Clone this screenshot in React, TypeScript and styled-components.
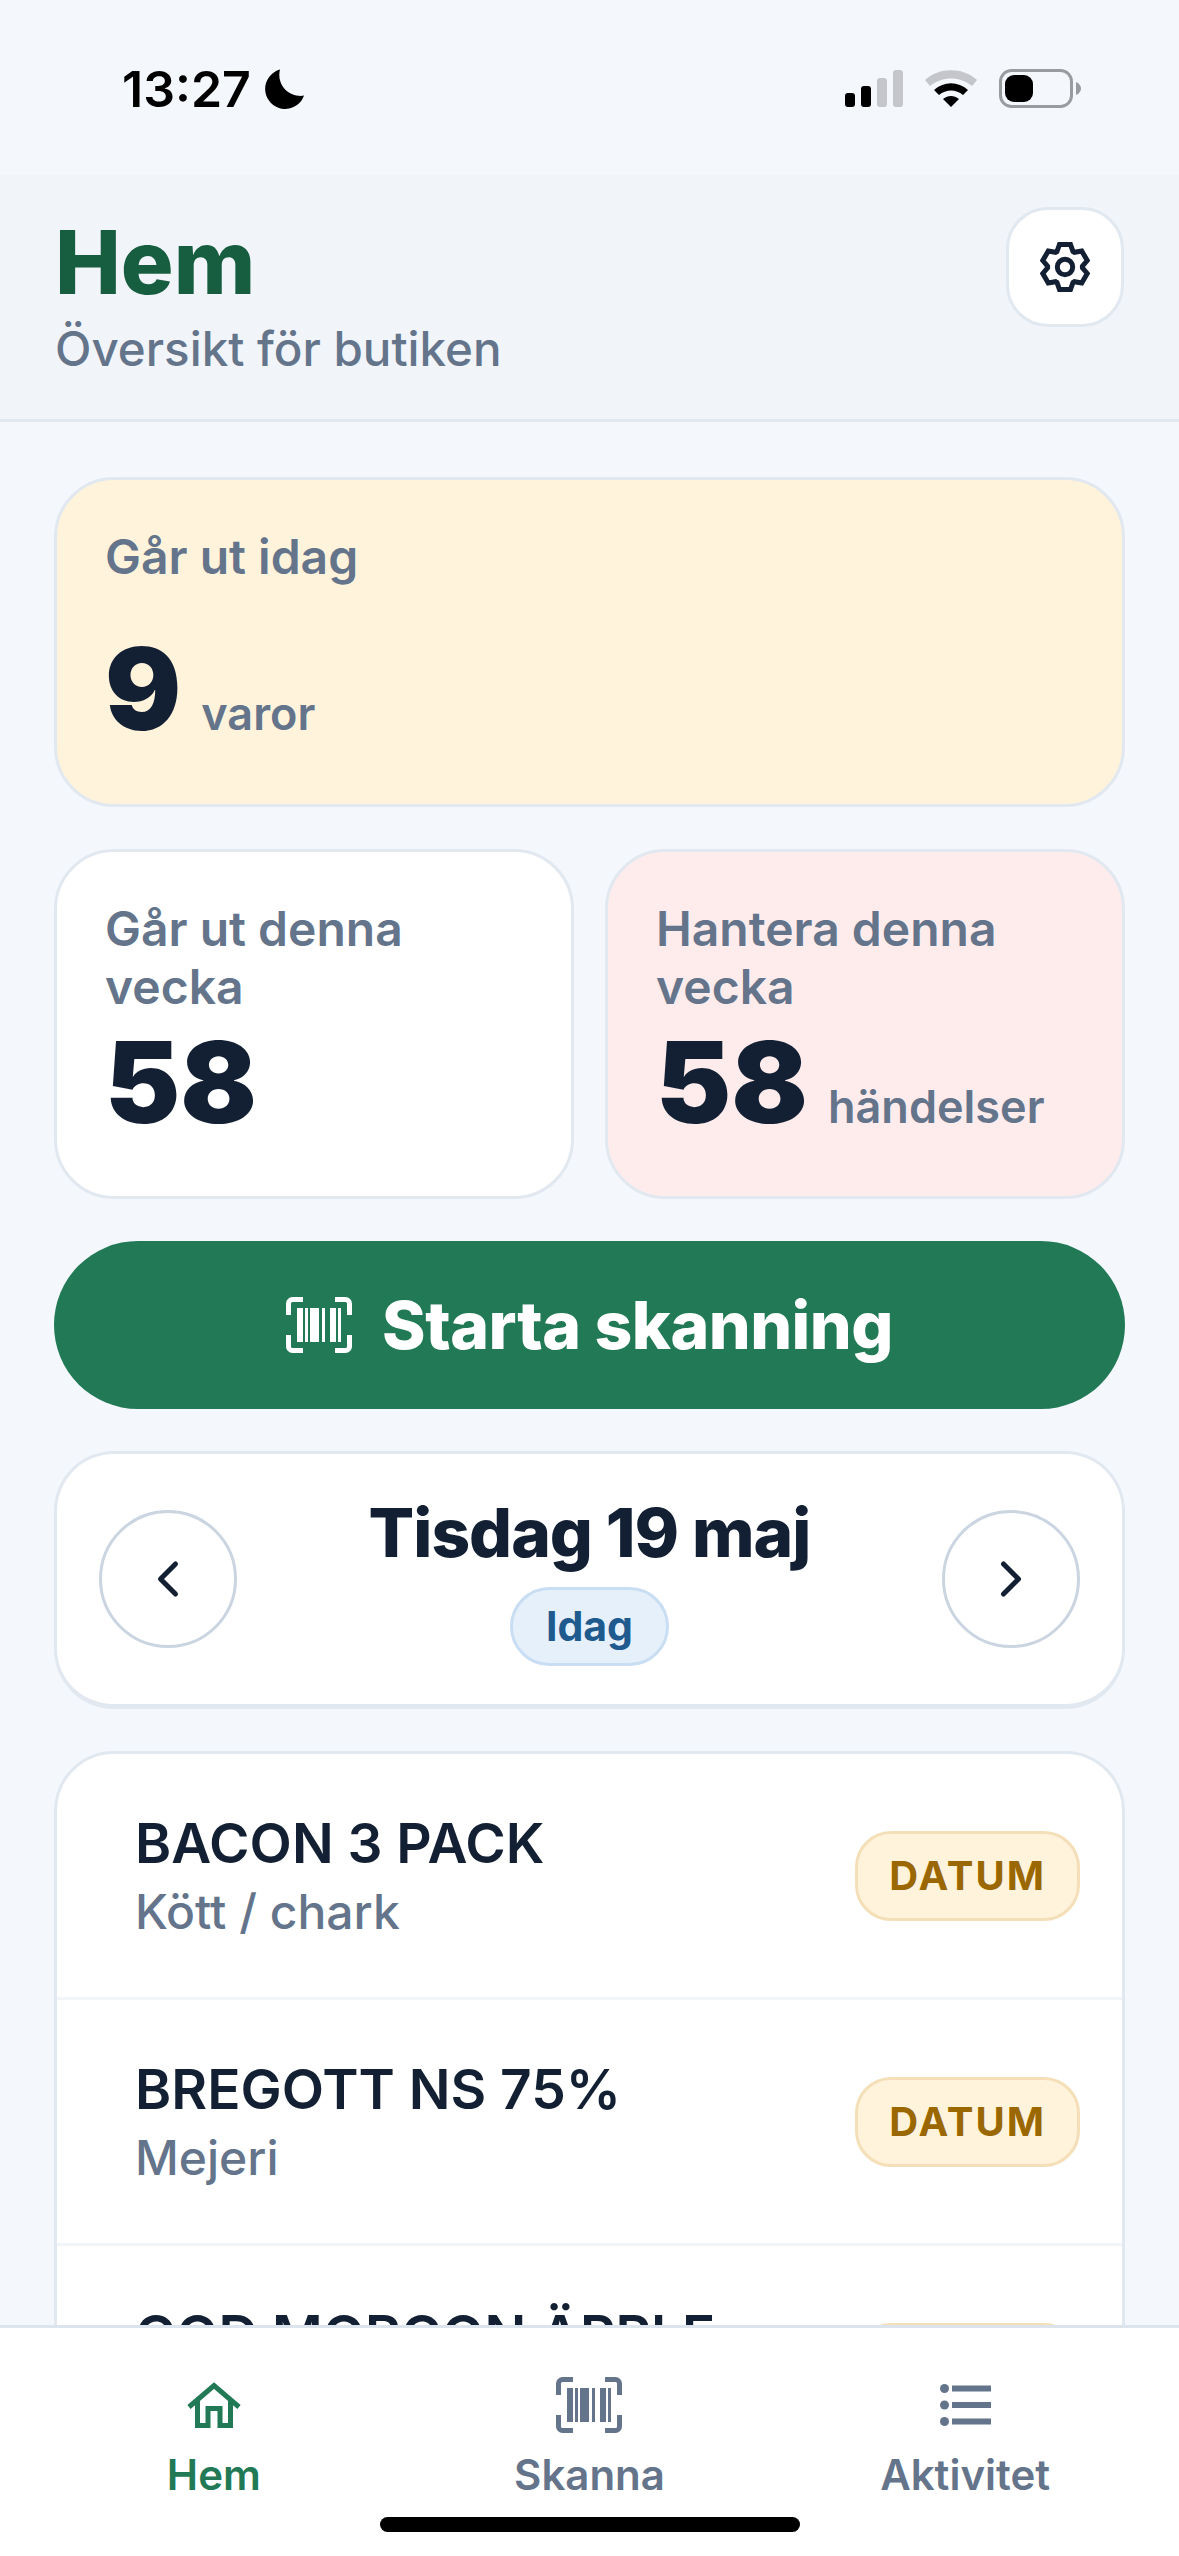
import styled, { createGlobalStyle } from 'styled-components';

const GlobalStyle = createGlobalStyle`
    html, body {
        margin: 0;
        padding: 0;
        background: #f4f7fc;
        font-family: Inter, 'Liberation Sans', sans-serif;
    }
    * {
        box-sizing: border-box;
    }
`;

const Screen = styled.div`
    width: 1179px;
    height: 2556px;
    display: flex;
    flex-direction: column;
    overflow: hidden;
    background: #f4f7fc;
`;

const StatusBar = styled.div`
    height: 175px;
    flex-shrink: 0;
    padding: 59px 98px 0 122px;
    display: flex;
    justify-content: space-between;
    align-items: flex-start;
`;

const Clock = styled.div`
    display: flex;
    align-items: center;
    gap: 14px;
    font-size: 50px;
    line-height: 60px;
    font-weight: 600;
    color: #000;
`;

const StatusIcons = styled.div`
    display: flex;
    align-items: center;
    gap: 22px;
    padding-top: 10px;
`;

const Header = styled.header`
    height: 247px;
    flex-shrink: 0;
    padding: 32px 55px 0 55px;
    display: flex;
    justify-content: space-between;
    align-items: flex-start;
    background: #f1f4f9;
    border-bottom: 3px solid #e2e8f0;
`;

const PageTitle = styled.h1`
    margin: 0;
    padding-top: 5px;
    font-size: 88px;
    line-height: 100px;
    font-weight: 800;
    color: #175e41;
`;

const PageSubtitle = styled.div`
    margin-top: 10px;
    font-size: 47.5px;
    line-height: 54px;
    font-weight: 500;
    color: #64748b;
`;

const SettingsButton = styled.button`
    width: 118px;
    height: 120px;
    padding: 0;
    display: flex;
    align-items: center;
    justify-content: center;
    background: #fff;
    border: 3px solid #e2e8f0;
    border-radius: 42px;
    color: #132033;
`;

const Main = styled.main`
    flex: 1;
    min-height: 0;
    overflow: hidden;
    padding: 55px 54px 0;
    display: flex;
    flex-direction: column;
`;

const StatCard = styled.section<{ $bg: string; $height: number }>`
    height: ${(p) => p.$height}px;
    flex-shrink: 0;
    padding: 48px 48px 0;
    background: ${(p) => p.$bg};
    border: 3px solid #e2e8f0;
    border-radius: 60px;
    min-width: 0;
`;

const StatLabel = styled.div`
    font-size: 48px;
    line-height: 58px;
    font-weight: 600;
    color: #64748b;
`;

const StatValueRow = styled.div<{ $top: number }>`
    margin-top: ${(p) => p.$top}px;
    display: flex;
    align-items: baseline;
    gap: 20px;
`;

const StatValue = styled.span`
    font-size: 113px;
    line-height: 112px;
    font-weight: 900;
    color: #132033;
`;

const StatUnit = styled.span`
    font-size: 45px;
    font-weight: 600;
    color: #64748b;
`;

const StatRow = styled.div`
    margin-top: 42px;
    flex-shrink: 0;
    display: grid;
    grid-template-columns: 1fr 1fr;
    gap: 31px;
`;

const ScanButton = styled.button`
    margin-top: 42px;
    height: 168px;
    flex-shrink: 0;
    display: flex;
    align-items: center;
    justify-content: center;
    gap: 30px;
    background: #217a55;
    border: 0;
    border-radius: 84px;
    color: #fff;
    font-family: inherit;
    font-size: 66px;
    font-weight: 800;
    letter-spacing: -0.5px;
`;

const DateCard = styled.section`
    margin-top: 42px;
    height: 258px;
    flex-shrink: 0;
    padding: 0 42px;
    display: flex;
    align-items: center;
    justify-content: space-between;
    background: #fff;
    border: 3px solid #e2e8f0;
    border-bottom-width: 5px;
    border-radius: 60px;
`;

const RoundButton = styled.button`
    width: 138px;
    height: 138px;
    padding: 0;
    display: flex;
    align-items: center;
    justify-content: center;
    background: #fff;
    border: 3px solid #cbd5e1;
    border-radius: 50%;
    color: #132033;
`;

const DateCenter = styled.div`
    display: flex;
    flex-direction: column;
    align-items: center;
    gap: 14px;
`;

const DateTitle = styled.div`
    font-size: 67.5px;
    line-height: 80px;
    font-weight: 800;
    letter-spacing: -1px;
    color: #132033;
`;

const TodayBadge = styled.span`
    height: 79px;
    padding: 0 33px;
    display: flex;
    align-items: center;
    background: #e6f0fb;
    border: 3px solid #c9ddf3;
    border-radius: 40px;
    font-size: 41px;
    font-weight: 700;
    color: #1f5a8f;
`;

const ListCard = styled.section`
    margin-top: 42px;
    background: #fff;
    border: 3px solid #e2e8f0;
    border-radius: 60px;
    flex-shrink: 0;
`;

const ListRow = styled.div`
    height: 246px;
    padding: 0 42px 0 78px;
    display: flex;
    align-items: center;
    justify-content: space-between;
    border-bottom: 3px solid #f1f5f9;
`;

const ItemName = styled.div`
    font-size: 55px;
    line-height: 68px;
    font-weight: 600;
    color: #132033;
`;

const ItemGroup = styled.div`
    margin-top: 4px;
    font-size: 48px;
    line-height: 62px;
    font-weight: 500;
    color: #64748b;
`;

const TypeBadge = styled.span`
    height: 90px;
    padding: 0 31px;
    display: flex;
    align-items: center;
    background: #fff3dc;
    border: 3px solid #f4dfb8;
    border-radius: 36px;
    font-size: 40px;
    font-weight: 700;
    letter-spacing: 2px;
    color: #9a6700;
`;

const TabBar = styled.nav`
    position: relative;
    height: 231px;
    flex-shrink: 0;
    padding: 44px 26px 0;
    display: grid;
    grid-template-columns: repeat(3, 1fr);
    align-items: start;
    background: #fff;
    border-top: 3px solid #dce4ed;
`;

const Tab = styled.div<{ $active?: boolean }>`
    display: flex;
    flex-direction: column;
    align-items: center;
    height: 128px;
    justify-content: space-between;
    font-size: 42px;
    line-height: 50px;
    font-weight: 600;
    color: ${(p) => (p.$active ? '#217a55' : '#64748b')};
`;

const TabIcon = styled.div`
    height: 66px;
    display: flex;
    align-items: center;
    justify-content: center;
`;

const HomeIndicator = styled.div`
    position: absolute;
    left: 380px;
    bottom: 24px;
    width: 420px;
    height: 15px;
    border-radius: 8px;
    background: #000;
`;

const MoonIcon = () => (
    <svg width="40" height="40" viewBox="0 0 40 40">
        <path fill="#000" d="M15 .6A20 20 0 1 0 39 26.6 21 21 0 0 1 15 .6z" />
    </svg>
);

const SignalIcon = () => (
    <svg width="58" height="37" viewBox="0 0 58 37">
        <rect x="0" y="23" width="10" height="14" rx="3" fill="#000" />
        <rect x="16" y="16" width="10" height="21" rx="3" fill="#000" />
        <rect x="32" y="8" width="10" height="29" rx="3" fill="#c4c6cb" />
        <rect x="48" y="0" width="10" height="37" rx="3" fill="#c4c6cb" />
    </svg>
);

const WifiIcon = () => (
    <svg width="52" height="37" viewBox="0 0 52 37">
        <path fill="#c4c6cb" d="M0 10C14-3 38-3 52 10l-5 6C35 6 17 6 5 16z" />
        <path fill="#000" d="M9 20c10-9 24-9 34 0l-5 5c-7-6-17-6-24 0z" />
        <path fill="#000" d="M18 29c5-4 11-4 16 0l-8 8z" />
    </svg>
);

const BatteryIcon = () => (
    <svg width="82" height="39" viewBox="0 0 82 39">
        <rect x="1.5" y="1.5" width="71" height="36" rx="11" fill="none" stroke="#9a9b9f" strokeWidth="3" />
        <rect x="6" y="6" width="28" height="27" rx="9" fill="#000" />
        <path fill="#9a9b9f" d="M77 13c3 1 5 4 5 6.500s-2 5.500-5 6.500z" />
    </svg>
);

// six flat teeth around the centre
const gearPoints = [0, 60, 120, 180, 240, 300]
    .flatMap((deg) => {
        const a = (deg * Math.PI) / 180;
        const at = (r: number, off: number) =>
            `${(25 + r * Math.sin(a) + off * Math.cos(a)).toFixed(2)},${(25 - r * Math.cos(a) + off * Math.sin(a)).toFixed(2)}`;
        return [at(15.5, -8), at(22.5, -5.5), at(22.5, 5.5), at(15.5, 8)];
    })
    .join(' ');

const GearIcon = () => (
    <svg width="50" height="50" viewBox="0 0 50 50" fill="none" stroke="currentColor" strokeWidth="5" strokeLinejoin="miter">
        <polygon points={gearPoints} />
        <circle cx="25" cy="25" r="7.700" />
    </svg>
);

const BarcodeIcon = () => (
    <svg width="66" height="56" viewBox="0 0 66 56" fill="currentColor">
        <g fill="none" stroke="currentColor" strokeWidth="5">
            <path d="M2.500 18V6.500a4 4 0 0 1 4-4H17" />
            <path d="M49 2.500h10.500a4 4 0 0 1 4 4V18" />
            <path d="M2.500 38v11.500a4 4 0 0 0 4 4H17" />
            <path d="M49 53.500h10.500a4 4 0 0 0 4-4V38" />
        </g>
        <rect x="11" y="11" width="6" height="34" />
        <rect x="19" y="11" width="3" height="34" />
        <rect x="24" y="11" width="9" height="34" />
        <rect x="36" y="11" width="3" height="34" />
        <rect x="44" y="11" width="6" height="34" />
        <rect x="52" y="11" width="3" height="34" />
    </svg>
);

const HomeIcon = () => (
    <svg width="54" height="46" viewBox="0 0 54 46" fill="none" stroke="currentColor" strokeWidth="5">
        <path d="M2 25 27 3.500 52 25" />
        <path d="M10.500 19v24.500H21V26.500h12v17h10.500V19" />
    </svg>
);

const ListIcon = () => (
    <svg width="51" height="42" viewBox="0 0 51 42" fill="currentColor">
        <circle cx="4.500" cy="4.500" r="4.500" />
        <circle cx="4.500" cy="21" r="4.500" />
        <circle cx="4.500" cy="37.500" r="4.500" />
        <rect x="12" y="1.500" width="39" height="6" />
        <rect x="12" y="18" width="39" height="6" />
        <rect x="12" y="34.500" width="39" height="6" />
    </svg>
);

const ChevronIcon = ({ d }: { d: string }) => (
    <svg width="60" height="60" viewBox="0 0 24 24" fill="none" stroke="currentColor" strokeWidth="2" strokeLinecap="round" strokeLinejoin="round">
        <path d={d} />
    </svg>
);

const items = [
    { name: 'BACON 3 PACK', group: 'Kött / chark' },
    { name: 'BREGOTT NS 75%', group: 'Mejeri' },
    // the group line of this row lies under the tab bar
    { name: 'GOD MORGON ÄPPLE', group: '\u00a0' },
];

const App = () => (
    <Screen>
        <GlobalStyle />
        <StatusBar>
            <Clock>
                13:27
                <MoonIcon />
            </Clock>
            <StatusIcons>
                <SignalIcon />
                <WifiIcon />
                <BatteryIcon />
            </StatusIcons>
        </StatusBar>
        <Header>
            <div>
                <PageTitle>Hem</PageTitle>
                <PageSubtitle>Översikt för butiken</PageSubtitle>
            </div>
            <SettingsButton>
                <GearIcon />
            </SettingsButton>
        </Header>
        <Main>
            <StatCard $bg="#fff3dc" $height={330}>
                <StatLabel>Går ut idag</StatLabel>
                <StatValueRow $top={47}>
                    <StatValue>9</StatValue>
                    <StatUnit>varor</StatUnit>
                </StatValueRow>
            </StatCard>
            <StatRow>
                <StatCard $bg="#fff" $height={350}>
                    <StatLabel>Går ut denna vecka</StatLabel>
                    <StatValueRow $top={10}>
                        <StatValue>58</StatValue>
                    </StatValueRow>
                </StatCard>
                <StatCard $bg="#feeced" $height={350}>
                    <StatLabel>Hantera denna vecka</StatLabel>
                    <StatValueRow $top={10}>
                        <StatValue>58</StatValue>
                        <StatUnit>händelser</StatUnit>
                    </StatValueRow>
                </StatCard>
            </StatRow>
            <ScanButton>
                <BarcodeIcon />
                Starta skanning
            </ScanButton>
            <DateCard>
                <RoundButton>
                    <ChevronIcon d="m15 18-6-6 6-6" />
                </RoundButton>
                <DateCenter>
                    <DateTitle>Tisdag 19 maj</DateTitle>
                    <TodayBadge>Idag</TodayBadge>
                </DateCenter>
                <RoundButton>
                    <ChevronIcon d="m9 18 6-6-6-6" />
                </RoundButton>
            </DateCard>
            <ListCard>
                {items.map((item) => (
                    <ListRow key={item.name}>
                        <div>
                            <ItemName>{item.name}</ItemName>
                            <ItemGroup>{item.group}</ItemGroup>
                        </div>
                        <TypeBadge>DATUM</TypeBadge>
                    </ListRow>
                ))}
            </ListCard>
        </Main>
        <TabBar>
            <Tab $active>
                <TabIcon>
                    <HomeIcon />
                </TabIcon>
                Hem
            </Tab>
            <Tab>
                <TabIcon>
                    <BarcodeIcon />
                </TabIcon>
                Skanna
            </Tab>
            <Tab>
                <TabIcon>
                    <ListIcon />
                </TabIcon>
                Aktivitet
            </Tab>
            <HomeIndicator />
        </TabBar>
    </Screen>
);

export default App;
